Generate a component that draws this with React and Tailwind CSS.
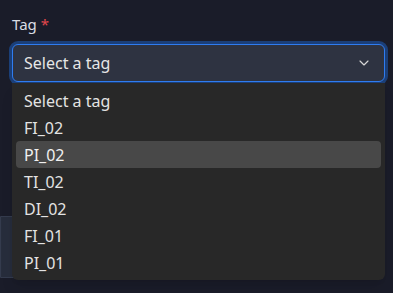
import { ChevronDown } from "lucide-react";

const tags = ["Select a tag", "FI_02", "PI_02", "TI_02", "DI_02", "FI_01", "PI_01"];

export default function App() {
  const active = "PI_02";
  return (
    <div className="min-h-screen bg-[#1a1c29] pl-3 pr-2 pt-[14px] text-[#e3e3e3]" style={{ fontFamily: '"Noto Sans", "Open Sans", sans-serif' }}>
      <label className="block h-5 text-[15px] leading-5 text-[#d9dce3]">
        Tag <span className="text-[#e5484d]">*</span>
      </label>

      <div className="relative mt-[10px]">
        <button className="flex h-[38px] w-full items-center justify-between rounded-md border border-[#2f7cf0] bg-[#2e3341] pl-[11px] pr-[12px] text-left text-[16px] text-[#e6e6e6] ring-[3px] ring-[#1b3f78]">
          <span>Select a tag</span>
          <ChevronDown size={16} strokeWidth={1.75} className="text-[#d6d6d6]" />
        </button>

        <ul className="absolute left-0 right-0 top-full z-10 mt-[1px] rounded-b-md bg-[#282828] p-1 shadow-lg">
          {tags.map((t) => (
            <li
              key={t}
              className={`flex h-[27px] items-center rounded px-2 text-[16px] ${t === active ? "bg-[#484848] text-[#f0f0f0]" : "text-[#e3e3e3]"}`}
            >
              {t}
            </li>
          ))}
        </ul>
      </div>

      <div className="-ml-3 mt-[134px] h-[62px] w-[120px] rounded-r-md border border-[#343b4d] bg-[#272d3c]" />
    </div>
  );
}
